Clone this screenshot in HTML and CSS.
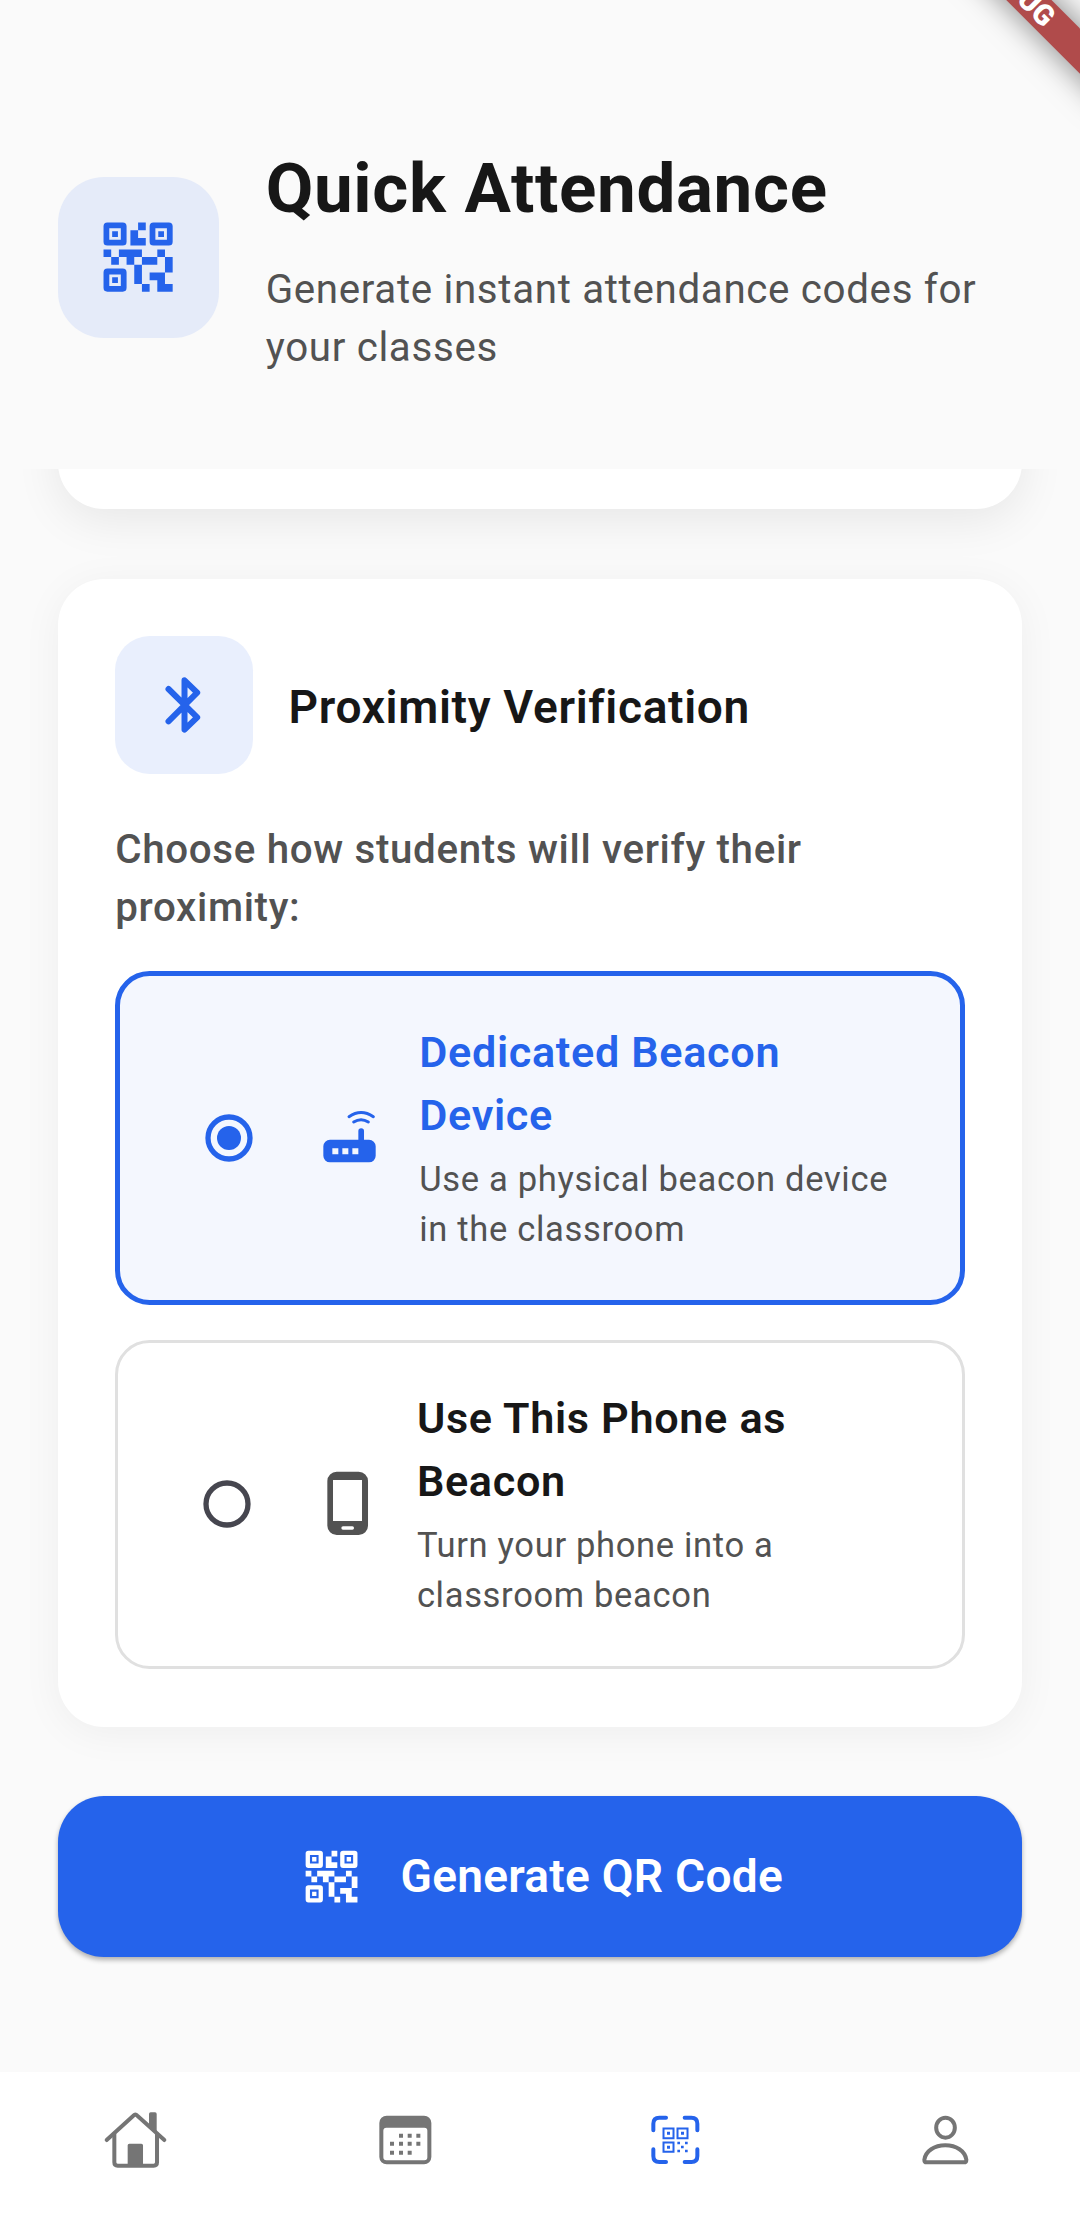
FILE: index.html
```
<!DOCTYPE html>
<html lang="en">
<head>
<meta charset="utf-8">
<title>Quick Attendance</title>
<link rel="stylesheet" href="styles.css">
</head>
<body>
<svg class="defs" aria-hidden="true">
  <symbol id="qr" viewBox="0 0 24 24">
    <path fill-rule="evenodd" d="M4 3h4a1 1 0 0 1 1 1v4a1 1 0 0 1-1 1H4a1 1 0 0 1-1-1V4a1 1 0 0 1 1-1zM4.5 4.5v3h3v-3zM5.25 5.25h1.5v1.5h-1.5zM16 3h4a1 1 0 0 1 1 1v4a1 1 0 0 1-1 1h-4a1 1 0 0 1-1-1V4a1 1 0 0 1 1-1zM16.5 4.5v3h3v-3zM17.25 5.25h1.5v1.5h-1.5zM4 15h4a1 1 0 0 1 1 1v4a1 1 0 0 1-1 1H4a1 1 0 0 1-1-1v-4a1 1 0 0 1 1-1zM4.5 16.5v3h3v-3zM5.25 17.25h1.5v1.5h-1.5z"/>
    <path d="M12 3h2v2h-2v2h2v2h-4V5h2zM3 10h2v2H3zM5 12h2v2H5zM7 10h6v2h-2v2H9v-2H7zM13 12h4v2h-4zM17 10h2v2h-2zM19 12h2v4h-2zM11 14h2v5h-2zM13 19h2v2h-2zM15 16h4v3h2v2h-4v-3h-2z"/>
  </symbol>
</svg>
<div class="app">
  <header class="header">
    <div class="header-icon"><svg><use href="#qr"/></svg></div>
    <div class="header-text">
      <h1>Quick Attendance</h1>
      <p>Generate instant attendance codes for<br>your classes</p>
    </div>
  </header>
  <main class="content">
    <section class="card card-previous"></section>
    <section class="card card-proximity">
      <div class="card-head">
        <div class="card-icon">
          <svg viewBox="452.500 697 200 200" fill="none" stroke="currentColor" stroke-width="18" stroke-linecap="round" stroke-linejoin="round"><path d="M505 748L591 833L553 870V722L591 759L505 845"/></svg>
        </div>
        <h2>Proximity Verification</h2>
      </div>
      <p class="prompt">Choose how students will verify their<br>proximity:</p>
      <div class="option option-selected">
        <svg class="radio" viewBox="0 0 48 48"><circle cx="24" cy="24" r="21" fill="none" stroke="currentColor" stroke-width="5.3"/><circle cx="24" cy="24" r="12" fill="currentColor"/></svg>
        <svg class="device" viewBox="650 434 200 200">
          <path fill="currentColor" fill-rule="evenodd" d="M692 541H777V515a8.5 8.5 0 0 1 17 0V541H809a20 20 0 0 1 20 20V589a20 20 0 0 1-20 20H692a20 20 0 0 1-20-20V561a20 20 0 0 1 20-20zM699 567v18h18v-18zM729 567v18h18v-18zM759 567v18h18v-18z"/>
          <path fill="none" stroke="currentColor" stroke-width="9" stroke-linecap="round" d="M749 472Q785 447 822 472M763 488Q785 474 807 488"/>
        </svg>
        <div class="option-text"><h3>Dedicated Beacon<br>Device</h3><p>Use a physical beacon device<br>in the classroom</p></div>
      </div>
      <div class="option">
        <svg class="radio" viewBox="0 0 48 48"><circle cx="24" cy="24" r="21" fill="none" stroke="currentColor" stroke-width="5.3"/></svg>
        <svg class="device" viewBox="642 423 200 200"><path fill="currentColor" fill-rule="evenodd" d="M710 425H776a28 28 0 0 1 28 28V587a28 28 0 0 1-28 28H710a28 28 0 0 1-28-28V453a28 28 0 0 1 28-28zM699 450V573H786V450zM729 589a5 5 0 0 0 0 10H757a5 5 0 0 0 0-10z"/></svg>
        <div class="option-text"><h3>Use This Phone as<br>Beacon</h3><p>Turn your phone into a<br>classroom beacon</p></div>
      </div>
    </section>
    <button class="generate" type="button"><svg><use href="#qr"/></svg><span>Generate QR Code</span></button>
  </main>
  <nav class="nav">
    <a><svg viewBox="125 142 200 200" fill="none" stroke="currentColor" stroke-width="12" stroke-linecap="round" stroke-linejoin="round">
      <path d="M139 241L219 168Q225 162 231 168L312 241"/><path d="M162 224V308Q162 318 172 318H280Q290 318 290 308V224"/>
      <path fill="currentColor" stroke="none" d="M207 252H243a5 5 0 0 1 5 5V314H202V257a5 5 0 0 1 5-5zM271 158H284a5 5 0 0 1 5 5V216L266 196V163a5 5 0 0 1 5-5z"/></svg></a>
    <a><svg viewBox="935 142 200 200" fill="currentColor">
      <path fill-rule="evenodd" d="M979 168H1091a22 22 0 0 1 22 22V292a22 22 0 0 1-22 22H979a22 22 0 0 1-22-22V190a22 22 0 0 1 22-22zM978 204a9 9 0 0 0-9 9V293a9 9 0 0 0 9 9H1092a9 9 0 0 0 9-9V213a9 9 0 0 0-9-9z"/>
      <g stroke="currentColor" stroke-width="12" stroke-linecap="butt"><path d="M1016 228h12M1042 228h12M1068 228h12M989 252.500h12M1016 252.500h12M1042 252.500h12M1068 252.500h12M989 279h12M1016 279h12M1042 279h12"/></g></svg></a>
    <a class="active"><svg viewBox="125 142 200 200" fill="none" stroke="currentColor" stroke-width="12" stroke-linecap="round">
      <path d="M159 212V192Q159 174 177 174H197M253 174H273Q291 174 291 192V212M159 269V289Q159 307 177 307H197M253 307H273Q291 307 291 289V269"/>
      <path stroke-width="6" stroke-linecap="butt" d="M189.500 206.500H219.500V235.500H189.500zM231.500 206.500H261.500V235.500H231.500zM189.500 248.500H219.500V276.500H189.500z"/>
      <path fill="currentColor" stroke="none" d="M200 216h9v9h-9zM242 216h9v9h-9zM200 258h9v9h-9zM231 246h8v8h-8zM254 246h8v8h-8zM242 258h8v8h-8zM231 270h8v8h-8zM254 270h8v8h-8z"/></svg></a>
    <a><svg viewBox="935 142 200 200" fill="none" stroke="currentColor" stroke-width="12" stroke-linejoin="round">
      <ellipse cx="1035.500" cy="204" rx="28" ry="30"/><path d="M979 308H1091Q1098 308 1098 300C1094 274 1068 257 1035 257S976 274 972 300Q972 308 979 308z"/></svg></a>
  </nav>
  <div class="debug-banner">DEBUG</div>
</div>
</body>
</html>
```
FILE: styles.css
```
* { box-sizing: border-box; }
body { margin: 0; font-family: Roboto, "Liberation Sans", sans-serif; letter-spacing: .66px; color: #171717; }
h1, h2, h3, p { margin: 0; }
svg { display: block; flex: none; }
.defs { position: absolute; width: 0; height: 0; }
.app { position: relative; display: flex; flex-direction: column; width: 1080px; height: 2227px; overflow: hidden; background: #fafafa; }

.header { flex: none; display: flex; align-items: flex-start; gap: 46.800px; height: 469px; padding: 141px 57.600px 0; }
.header-icon { display: flex; align-items: center; justify-content: center; width: 161.300px; height: 161.300px; margin-top: 35.700px; border-radius: 46px; background: #e5ebf9; color: #2563eb; }
.header-icon svg { width: 92.200px; height: 92.200px; }
.header h1 { font-size: 69.120px; line-height: 96.500px; font-weight: 700; }
.header p { margin-top: 23.700px; font-size: 40.320px; line-height: 57.700px; color: #525252; }

.content { flex: 1; min-height: 0; overflow: hidden; display: flex; flex-direction: column; padding: 0 57.600px; }
.card { flex: none; border-radius: 46px; background: #fff; }
.card-previous { height: 160px; margin-top: -120px; box-shadow: 0 11.500px 46px rgba(0,0,0,.08); }
.card-proximity { height: 1148px; margin-top: 69.700px; padding: 57.600px; box-shadow: 0 6px 40px rgba(0,0,0,.05); }
.card-head { display: flex; align-items: center; gap: 35.200px; }
.card-icon { display: flex; align-items: center; justify-content: center; width: 138.200px; height: 138.200px; border-radius: 34.600px; background: #e9effd; color: #2563eb; }
.card-icon svg { width: 66.700px; height: 66.700px; }
.card h2 { padding-top: 3px; font-size: 46.080px; line-height: 64px; font-weight: 600; }
.prompt { margin-top: 46.800px; font-size: 40.320px; line-height: 57.700px; font-weight: 500; color: #525252; }
.option { display: flex; align-items: center; height: 329px; margin-top: 35px; padding-left: 84.500px; border: 3px solid #e0e0e0; border-radius: 34.600px; color: #525252; }
.option-selected { height: 334px; margin-top: 34px; padding-left: 84.900px; border: 5px solid #2563eb; background: #f4f7fe; color: #2563eb; }
.radio { width: 48px; height: 48px; color: #46464f; }
.option-selected .radio { color: #2563eb; }
.device { width: 66.700px; height: 66.700px; margin-left: 63px; }
.option-text { margin: 0 0 1px 36.500px; }
.option-selected .option-text { margin-bottom: 0; }
.option h3 { font-size: 43.200px; line-height: 63px; font-weight: 600; color: #171717; }
.option-selected h3 { color: #2563eb; }
.option-text p { margin-top: 7px; font-size: 34.560px; line-height: 50px; color: #525252; }
.generate { flex: none; display: flex; align-items: center; justify-content: center; gap: 34.500px; height: 161.300px; margin-top: 69px; padding: 0; border: 0; border-radius: 46px; background: #2563eb; color: #fff; font: 600 46.080px/64px Roboto, "Liberation Sans", sans-serif; letter-spacing: .26px; box-shadow: 0 3px 5px rgba(0,0,0,.3); }
.generate svg { width: 69.100px; height: 69.100px; }

.nav { flex: none; display: grid; grid-template-columns: repeat(4, 1fr); height: 155px; padding-top: 35.300px; background: #fff; color: #757575; }
.nav a { display: flex; justify-content: center; }
.nav svg { width: 66.700px; height: 66.700px; }
.nav .active { color: #2563eb; }

/* Corner ribbon laid over the screen */
.debug-banner { position: absolute; left: 866px; top: -29px; width: 300px; height: 31.500px; padding-left: 5px; transform: rotate(45deg); background: #b04b4b; color: #fff; font-size: 29px; font-weight: 900; line-height: 32px; text-align: center; letter-spacing: 0; box-shadow: 0 0 32px rgba(0,0,0,.5); }
svg use { fill: currentColor; }
```
